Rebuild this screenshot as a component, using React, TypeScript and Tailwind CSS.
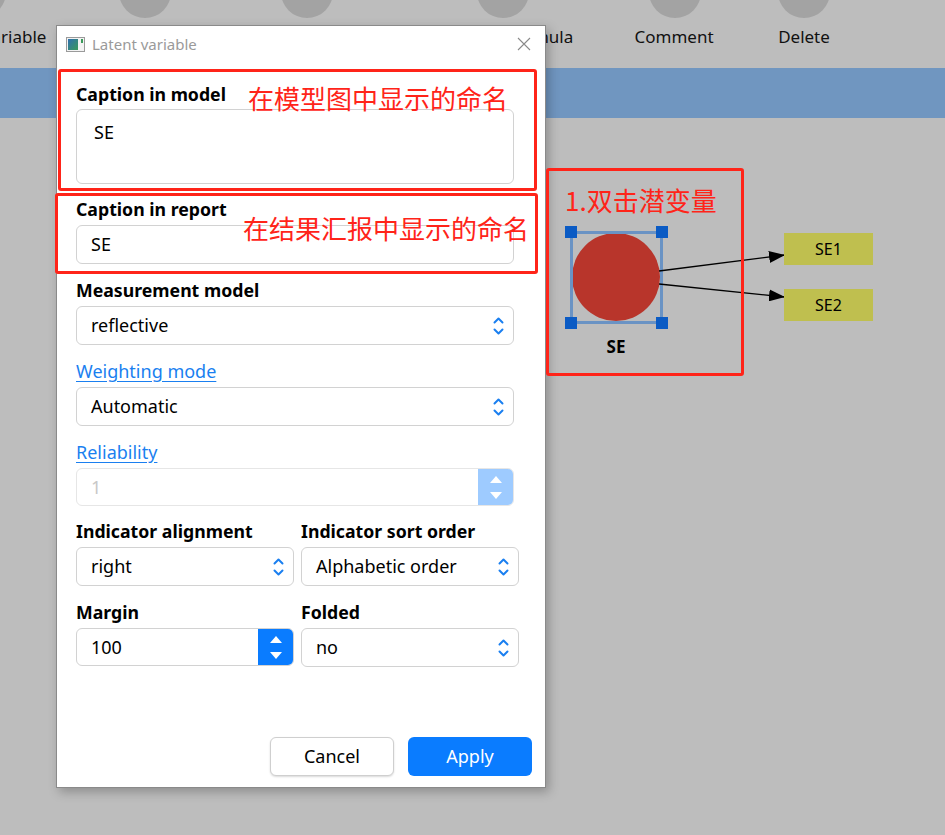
import React from "react";

const FONT = "font-['Noto_Sans','Noto_Sans_CJK_SC',sans-serif]";
const CJK = "font-['Noto_Sans_CJK_SC','Noto_Sans_CJK_SC',sans-serif]";

function Chevrons() {
  return (
    <svg width="11" height="22" viewBox="0 0 11 22" className="shrink-0">
      <path d="M1.5 7.5 L5.5 3.5 L9.5 7.5" fill="none" stroke="#1a7ff0" strokeWidth="2" strokeLinecap="round" strokeLinejoin="round" />
      <path d="M1.5 14.5 L5.5 18.5 L9.5 14.5" fill="none" stroke="#1a7ff0" strokeWidth="2" strokeLinecap="round" strokeLinejoin="round" />
    </svg>
  );
}

function Select({ value, className = "" }: { value: string; className?: string }) {
  return (
    <div className={`h-[39px] rounded-[6px] border border-[#d2d2d2] bg-white flex items-center justify-between pl-[14px] pr-[9px] text-[18px] text-black ${className}`}>
      <span>{value}</span>
      <Chevrons />
    </div>
  );
}

function Spin({ value, disabled, className = "" }: { value: string; disabled?: boolean; className?: string }) {
  return (
    <div className={`h-[38px] rounded-[6px] border flex items-stretch overflow-hidden ${disabled ? "border-[#e6e6e6]" : "border-[#d2d2d2]"} ${className}`}>
      <div className={`flex-1 flex items-center pl-[14px] text-[18px] ${disabled ? "text-[#c8c8c8]" : "text-black"}`}>{value}</div>
      <div className={`w-[35px] flex flex-col items-center justify-center gap-[9px] ${disabled ? "bg-[#9ecbff]" : "bg-[#0a7cff]"}`}>
        <svg width="12" height="7" viewBox="0 0 12 7"><path d="M0 7 L6 0 L12 7 Z" fill="#fff" /></svg>
        <svg width="12" height="7" viewBox="0 0 12 7"><path d="M0 0 L6 7 L12 0 Z" fill="#fff" /></svg>
      </div>
    </div>
  );
}

function Label({ children, link }: { children: React.ReactNode; link?: boolean }) {
  return (
    <div className={`h-[24px] leading-[24px] mb-[4px] ${link ? "text-[18px] text-[#1a7ff0] underline underline-offset-[3px]" : "text-[17.7px] font-bold text-black"}`}>
      {children}
    </div>
  );
}

const tools = [
  { label: "Variable", ml: "-ml-[46px]" },
  { label: "", ml: "ml-[11px]" },
  { label: "", ml: "ml-[42px]" },
  { label: "Formula", ml: "ml-[113px]" },
  { label: "Comment", ml: "ml-[14px]" },
  { label: "Delete", ml: "ml-[10px]" },
];

export default function App() {
  return (
    <div className={`relative w-[945px] h-[835px] overflow-hidden bg-[#bdbdbd] ${FONT}`}>
      {/* toolbar */}
      <div className="h-[68px] overflow-hidden">
        <div className="flex -mt-[34px]">
          <div className="-ml-[46px] w-[52px] h-[52px] rounded-full bg-[#a3a3a3]" />
          <div className="ml-[113px] w-[52px] h-[52px] rounded-full bg-[#a3a3a3]" />
          <div className="ml-[110px] w-[52px] h-[52px] rounded-full bg-[#a3a3a3]" />
          <div className="ml-[144px] w-[52px] h-[52px] rounded-full bg-[#a3a3a3]" />
          <div className="ml-[120px] w-[52px] h-[52px] rounded-full bg-[#a3a3a3]" />
          <div className="ml-[77px] w-[52px] h-[52px] rounded-full bg-[#a3a3a3]" />
        </div>
        <div className="flex mt-[8px]">
          {tools.map((t, i) => (
            <div key={i} className={`${t.ml} w-[120px] h-[22px] shrink-0 text-center text-[17px] leading-[22px] text-[#111]`}>
              {t.label}
            </div>
          ))}
        </div>
      </div>
      <div className="h-[50px] bg-[#7096c0]" />

      {/* diagram */}
      <svg className="absolute left-0 top-0" width="945" height="835" viewBox="0 0 945 835">
        <defs>
          <marker id="ah" markerWidth="16" markerHeight="12" refX="16" refY="6" orient="auto" markerUnits="userSpaceOnUse">
            <path d="M0 0 L16 6 L0 12 Z" fill="#000" />
          </marker>
        </defs>
        <circle cx="616" cy="277" r="44" fill="#b8352b" />
        <rect x="571.5" y="232.5" width="90" height="90" fill="none" stroke="#6a93c4" strokeWidth="3" />
        <rect x="565" y="226" width="12" height="12" fill="#0b5bc4" />
        <rect x="656" y="226" width="12" height="12" fill="#0b5bc4" />
        <rect x="565" y="317" width="12" height="12" fill="#0b5bc4" />
        <rect x="656" y="317" width="12" height="12" fill="#0b5bc4" />
        <line x1="659" y1="271" x2="785" y2="255" stroke="#000" strokeWidth="1.3" markerEnd="url(#ah)" />
        <line x1="659" y1="284" x2="785" y2="297" stroke="#000" strokeWidth="1.3" markerEnd="url(#ah)" />
      </svg>
      <div className="absolute left-[596px] top-[335px] w-[40px] text-center text-[17px] font-bold leading-[24px] text-black">SE</div>
      <div className="absolute left-[784px] top-[233px] w-[89px] h-[32px] bg-[#bfbf4f] flex items-center justify-center text-[16px] text-black">SE1</div>
      <div className="absolute left-[784px] top-[289px] w-[89px] h-[32px] bg-[#bfbf4f] flex items-center justify-center text-[16px] text-black">SE2</div>

      {/* dialog */}
      <div className="absolute left-[56px] top-[25px] w-[490px] h-[763px] bg-white border border-[#8a8a8a] shadow-[3px_4px_10px_rgba(0,0,0,0.25)] flex flex-col">
        <div className="h-[36px] flex items-center pl-[9px] pr-[14px] shrink-0">
          <svg width="19" height="15" viewBox="0 0 19 15" className="mr-[7px]">
            <defs>
              <linearGradient id="wg" x1="0" y1="0" x2="1" y2="1">
                <stop offset="0" stopColor="#2f6fb0" />
                <stop offset="1" stopColor="#3a9a5a" />
              </linearGradient>
            </defs>
            <rect x="0.5" y="0.5" width="18" height="14" fill="#f3f3f3" stroke="#9a9a9a" />
            <rect x="2" y="2" width="10" height="11" fill="url(#wg)" />
            <rect x="15" y="2" width="2" height="4" fill="#3a9a5a" />
          </svg>
          <span className="text-[15px] text-[#9a9a9a] flex-1">Latent variable</span>
          <svg width="14" height="14" viewBox="0 0 14 14">
            <path d="M1 1 L13 13 M13 1 L1 13" stroke="#8a8a8a" strokeWidth="1.1" />
          </svg>
        </div>

        <div className="pl-[19px] pt-[20px] flex flex-col">
          <Label>Caption in model</Label>
          <div className="w-[438px] h-[75px] -mt-[1px] rounded-[6px] border border-[#d2d2d2] pl-[17px] pt-[10px] text-[18px] leading-[24px] text-black">SE</div>

          <div className="mt-[13px]"><Label>Caption in report</Label></div>
          <div className="w-[438px] h-[39px] rounded-[6px] border border-[#d2d2d2] pl-[14px] flex items-center text-[18px] text-black">SE</div>

          <div className="mt-[14px]"><Label>Measurement model</Label></div>
          <Select value="reflective" className="w-[438px]" />

          <div className="mt-[14px]"><Label link>Weighting mode</Label></div>
          <Select value="Automatic" className="w-[438px]" />

          <div className="mt-[14px]"><Label link>Reliability</Label></div>
          <Spin value="1" disabled className="w-[438px]" />

          <div className="mt-[13px] grid grid-cols-[218px_218px] gap-x-[7px]">
            <div>
              <Label>Indicator alignment</Label>
              <Select value="right" />
            </div>
            <div>
              <Label>Indicator sort order</Label>
              <Select value="Alphabetic order" />
            </div>
            <div className="mt-[14px]">
              <Label>Margin</Label>
              <Spin value="100" />
            </div>
            <div className="mt-[14px]">
              <Label>Folded</Label>
              <Select value="no" />
            </div>
          </div>
        </div>

        <div className="mt-auto flex justify-end gap-[14px] pr-[13px] pb-[11px]">
          <button className="w-[124px] h-[39px] rounded-[6px] border border-[#cfcfcf] bg-white shadow-[0_1px_2px_rgba(0,0,0,0.15)] text-[18px] text-black">Cancel</button>
          <button className="w-[124px] h-[39px] rounded-[6px] bg-[#0a7cff] text-[18px] text-white">Apply</button>
        </div>
      </div>

      {/* annotations */}
      <div className="absolute left-[58px] top-[69px] w-[479px] h-[122px] border-[3px] border-[#ff2419] rounded-[3px]" />
      <div className="absolute left-[55px] top-[193px] w-[483px] h-[81px] border-[3px] border-[#ff2419] rounded-[3px]" />
      <div className="absolute left-[546px] top-[168px] w-[198px] h-[208px] border-[3px] border-[#ff2419] rounded-[3px]" />
      <div className={`absolute left-[248px] top-[81px] text-[26px] leading-[34px] text-[#ff2419] ${CJK}`}>在模型图中显示的命名</div>
      <div className={`absolute left-[243px] top-[211px] text-[26px] leading-[34px] text-[#ff2419] ${CJK}`}>在结果汇报中显示的命名</div>
      <div className={`absolute left-[565px] top-[183px] text-[26px] leading-[34px] text-[#ff2419] ${CJK}`}>1.双击潜变量</div>
    </div>
  );
}
